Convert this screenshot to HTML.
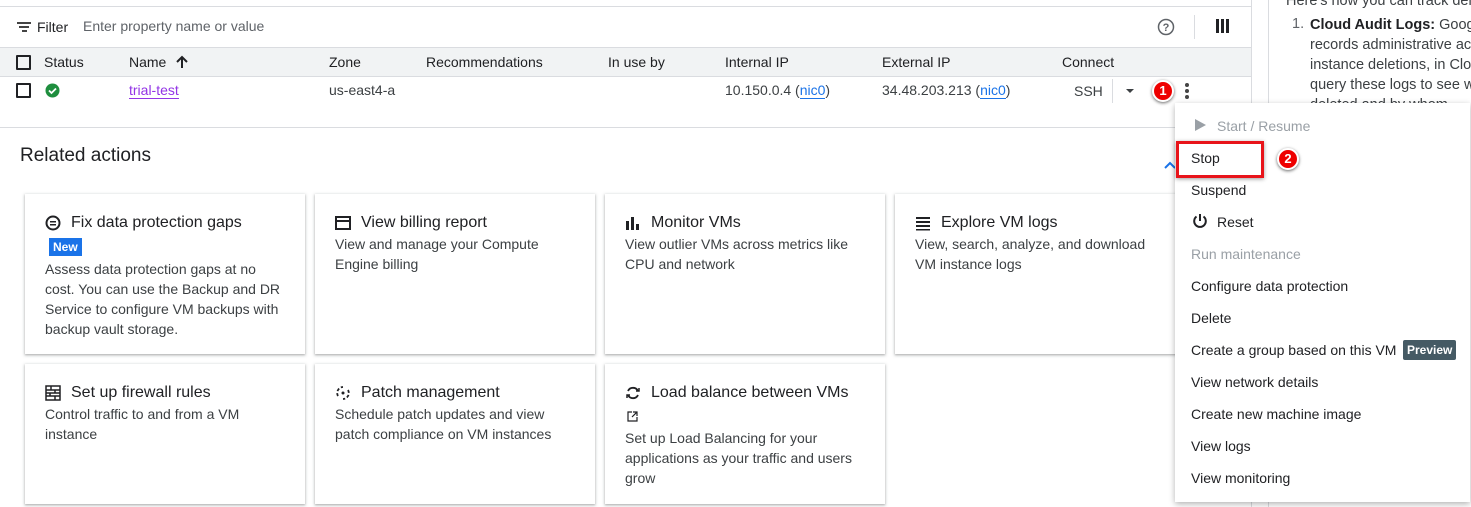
<!DOCTYPE html>
<html><head><style>
*{box-sizing:border-box;margin:0;padding:0}
body{width:1471px;height:507px;overflow:hidden;background:#fff;font-family:"Liberation Sans",Arial,sans-serif;color:#202124;position:relative;font-size:14px}
.a{position:absolute;white-space:nowrap}
.card{position:absolute;background:#fff;box-shadow:0 1px 2px rgba(60,64,67,.3),0 1px 3px 1px rgba(60,64,67,.15);padding:19px 20px}
.card h3{font-size:16px;font-weight:normal;color:#202124;display:flex;align-items:center;gap:10px;height:20px}
.card p{font-size:14px;line-height:20px;color:#3c4043;margin-top:1px}
.menu{position:absolute;left:1175px;top:103px;width:295px;height:399px;background:#fff;box-shadow:0 2px 6px rgba(0,0,0,.3)}
.mi{position:absolute;left:16px;font-size:14px;color:#202124}
.dis{color:#9aa0a6}
.badge{display:inline-block;width:22px;height:22px;border-radius:50%;background:#e00;border:2px solid #fff;box-shadow:0 1px 3px rgba(0,0,0,.6);color:#fff;font-weight:bold;font-size:13px;text-align:center;line-height:18px}
</style></head><body>
<div class="a" style="left:0;top:6px;width:1252px;height:1px;background:#dadce0"></div>
<svg class="a" style="left:16px;top:20px" width="16" height="14"><rect x="1" y="2" width="14" height="2" fill="#444"/><rect x="3" y="6" width="10" height="2" fill="#444"/><rect x="6" y="10" width="5" height="2" fill="#444"/></svg>
<div class="a" style="left:37px;top:19px;font-size:14px">Filter</div>
<div class="a" style="left:83px;top:18px;font-size:14px;color:#5f6368">Enter property name or value</div>
<svg class="a" style="left:1157px;top:18px" width="18" height="18"><circle cx="9" cy="9" r="7.5" fill="none" stroke="#5f6368" stroke-width="1.5"/><text x="9" y="13" font-size="11" text-anchor="middle" fill="#5f6368" font-family="Liberation Sans" font-weight="bold">?</text></svg>
<div class="a" style="left:1194px;top:15px;width:1px;height:24px;background:#dadce0"></div>
<svg class="a" style="left:1216px;top:19px" width="14" height="14"><rect x="0" y="0" width="3" height="14" fill="#202124"/><rect x="5" y="0" width="3" height="14" fill="#202124"/><rect x="10" y="0" width="3" height="14" fill="#202124"/></svg>
<div class="a" style="left:0;top:47px;width:1252px;height:30px;background:#f1f3f4;border-top:1px solid #dadce0;border-bottom:1px solid #dadce0"></div>
<div class="a" style="left:16px;top:55px;width:15px;height:15px;border:2px solid #202124;border-radius:1px"></div>
<div class="a" style="left:44px;top:54px">Status</div>
<div class="a" style="left:129px;top:54px">Name</div>
<svg class="a" style="left:176px;top:55px" width="12" height="14"><path d="M6 13V2M1 7l5-5 5 5" stroke="#202124" stroke-width="2" fill="none"/></svg>
<div class="a" style="left:329px;top:54px">Zone</div>
<div class="a" style="left:426px;top:54px">Recommendations</div>
<div class="a" style="left:608px;top:54px">In use by</div>
<div class="a" style="left:725px;top:54px">Internal IP</div>
<div class="a" style="left:882px;top:54px">External IP</div>
<div class="a" style="left:1062px;top:54px">Connect</div>
<div class="a" style="left:16px;top:83px;width:15px;height:15px;border:2px solid #202124;border-radius:1px"></div>
<svg class="a" style="left:45px;top:83px" width="15" height="15"><circle cx="7.5" cy="7.5" r="7" fill="#1e8e3e"/><path d="M4 7.5l2.5 2.5 4.5-4.5" stroke="#fff" stroke-width="1.8" fill="none"/></svg>
<div class="a" style="left:129px;top:82px;color:#9334e6;border-bottom:1px solid #9334e6;line-height:16px">trial-test</div>
<div class="a" style="left:329px;top:82px;color:#3c4043">us-east4-a</div>
<div class="a" style="left:725px;top:82px;color:#3c4043">10.150.0.4 (<span style="color:#1a73e8;border-bottom:1px solid #1a73e8">nic0</span>)</div>
<div class="a" style="left:882px;top:82px;color:#3c4043">34.48.203.213 (<span style="color:#1a73e8;border-bottom:1px solid #1a73e8">nic0</span>)</div>
<div class="a" style="left:1074px;top:83px;color:#3c4043">SSH</div>
<div class="a" style="left:1112px;top:79px;width:1px;height:24px;background:#dadce0"></div>
<svg class="a" style="left:1125px;top:88px" width="10" height="6"><path d="M1 1h8L5 5z" fill="#3c4043"/></svg>
<div class="a" style="left:1152px;top:80px"><span class="badge">1</span></div>
<svg class="a" style="left:1184px;top:82px" width="6" height="18"><circle cx="3" cy="3" r="2" fill="#444"/><circle cx="3" cy="9" r="2" fill="#444"/><circle cx="3" cy="15" r="2" fill="#444"/></svg>
<div class="a" style="left:0;top:127px;width:1252px;height:1px;background:#dadce0"></div>
<div class="a" style="left:20px;top:145px;font-size:19px;color:#202124">Related actions</div>
<svg class="a" style="left:1164px;top:161px" width="12" height="8"><path d="M1 7l5-5 5 5" stroke="#1a73e8" stroke-width="2" fill="none"/></svg>
<div class="a" style="left:1251px;top:0;width:1px;height:507px;background:#dadce0"></div>
<div class="a" style="left:1268px;top:0;width:1px;height:507px;background:#dadce0"></div>
<div class="a" style="left:1286px;top:-7px;color:#3c4043;font-size:14.5px">Here's how you can track dele</div>
<div class="a" style="left:1292px;top:16px;color:#5f6368;font-size:14.5px">1.</div>
<div class="a" style="left:1310px;top:15px;line-height:20px;color:#3c4043;font-size:14.5px"><b style="color:#202124">Cloud Audit Logs:</b> Google<br>records administrative act<br>instance deletions, in Clou<br>query these logs to see wh<br>deleted and by whom</div>

<div class="card" style="left:25px;top:194px;width:280px;height:160px"><h3><svg width="16" height="16"><circle cx="8" cy="8" r="6.5" fill="none" stroke="#202124" stroke-width="2"/><rect x="5" y="6" width="6" height="1.5" fill="#202124"/><rect x="5" y="9" width="6" height="1.5" fill="#202124"/></svg>Fix data protection gaps</h3>
<div style="display:inline-block;background:#1a73e8;color:#fff;font-size:12px;font-weight:bold;padding:2px 4px;margin:5px 0 3px 4px">New</div>
<p style="margin-top:0">Assess data protection gaps at no cost. You can use the Backup and DR Service to configure VM backups with backup vault storage.</p></div>
<div class="card" style="left:315px;top:194px;width:280px;height:160px"><h3><svg width="16" height="16"><rect x="1" y="2" width="14" height="12" fill="none" stroke="#202124" stroke-width="2"/><rect x="1" y="5" width="14" height="2" fill="#202124"/></svg>View billing report</h3><p>View and manage your Compute Engine billing</p></div>
<div class="card" style="left:605px;top:194px;width:280px;height:160px"><h3><svg width="16" height="16"><rect x="1" y="6" width="3" height="9" fill="#202124"/><rect x="6" y="2" width="3" height="13" fill="#202124"/><rect x="11" y="9" width="3" height="6" fill="#202124"/></svg>Monitor VMs</h3><p>View outlier VMs across metrics like CPU and network</p></div>
<div class="card" style="left:895px;top:194px;width:290px;height:160px"><h3><svg width="16" height="16"><rect x="1" y="2" width="14" height="2" fill="#202124"/><rect x="1" y="6" width="14" height="2" fill="#202124"/><rect x="1" y="10" width="14" height="2" fill="#202124"/><rect x="1" y="14" width="14" height="1.5" fill="#202124"/></svg>Explore VM logs</h3><p>View, search, analyze, and download VM instance logs</p></div>
<div class="card" style="left:25px;top:364px;width:280px;height:140px"><h3><svg width="16" height="16"><rect x="1" y="1" width="14" height="14" fill="none" stroke="#202124" stroke-width="1.5"/><path d="M1 5h14M1 8h14M1 11h14M6 1v4M10 5v3M5 8v3M10 11v4" stroke="#202124" stroke-width="1.5"/></svg>Set up firewall rules</h3><p>Control traffic to and from a VM instance</p></div>
<div class="card" style="left:315px;top:364px;width:280px;height:140px"><h3><svg width="16" height="16"><path d="M3 11A6 6 0 0 1 8 2M13 5a6 6 0 0 1-5 9" stroke="#202124" stroke-width="1.8" fill="none" stroke-dasharray="3 2"/><circle cx="8" cy="8" r="1.5" fill="#202124"/></svg>Patch management</h3><p>Schedule patch updates and view patch compliance on VM instances</p></div>
<div class="card" style="left:605px;top:364px;width:280px;height:140px"><h3><svg width="16" height="16"><path d="M13 6A5.5 5.5 0 0 0 3 6M3 10a5.5 5.5 0 0 0 10 0" stroke="#202124" stroke-width="1.8" fill="none"/><path d="M11 6h3V3M5 10H2v3" stroke="#202124" stroke-width="1.5" fill="none"/></svg>Load balance between VMs</h3>
<svg style="margin:8px 0 0 2px;display:block" width="11" height="11"><path d="M5 1H1v9h9V6M6 1h4v4M10 1L5 6" stroke="#202124" stroke-width="1.2" fill="none"/></svg>
<p style="margin-top:6px">Set up Load Balancing for your applications as your traffic and users grow</p></div>

<div class="menu">
<svg class="a" style="left:20px;top:16px" width="11" height="12"><path d="M0 0l11 6-11 6z" fill="#9aa0a6"/></svg>
<div class="mi dis" style="left:42px;top:15px">Start / Resume</div>
<div class="mi" style="top:47px">Stop</div>
<div class="mi" style="top:79px">Suspend</div>
<svg class="a" style="left:17px;top:110px" width="16" height="16"><path d="M8 1v7" stroke="#202124" stroke-width="2"/><path d="M4.5 3.5a5.8 5.8 0 1 0 7 0" stroke="#202124" stroke-width="2" fill="none"/></svg>
<div class="mi" style="left:42px;top:111px">Reset</div>
<div class="mi dis" style="top:143px">Run maintenance</div>
<div class="mi" style="top:175px">Configure data protection</div>
<div class="mi" style="top:207px">Delete</div>
<div class="mi" style="top:239px">Create a group based on this VM</div>
<div class="a" style="left:228px;top:237px;background:#455a64;color:#fff;font-size:12px;font-weight:bold;padding:3px 4px;border-radius:2px">Preview</div>
<div class="mi" style="top:271px">View network details</div>
<div class="mi" style="top:303px">Create new machine image</div>
<div class="mi" style="top:335px">View logs</div>
<div class="mi" style="top:367px">View monitoring</div>
</div>
<div class="a" style="left:1176px;top:141px;width:88px;height:37px;border:3px solid #e8141a;box-shadow:0 1px 4px rgba(0,0,0,.4)"></div>
<div class="a" style="left:1277px;top:148px"><span class="badge">2</span></div>
</body></html>
